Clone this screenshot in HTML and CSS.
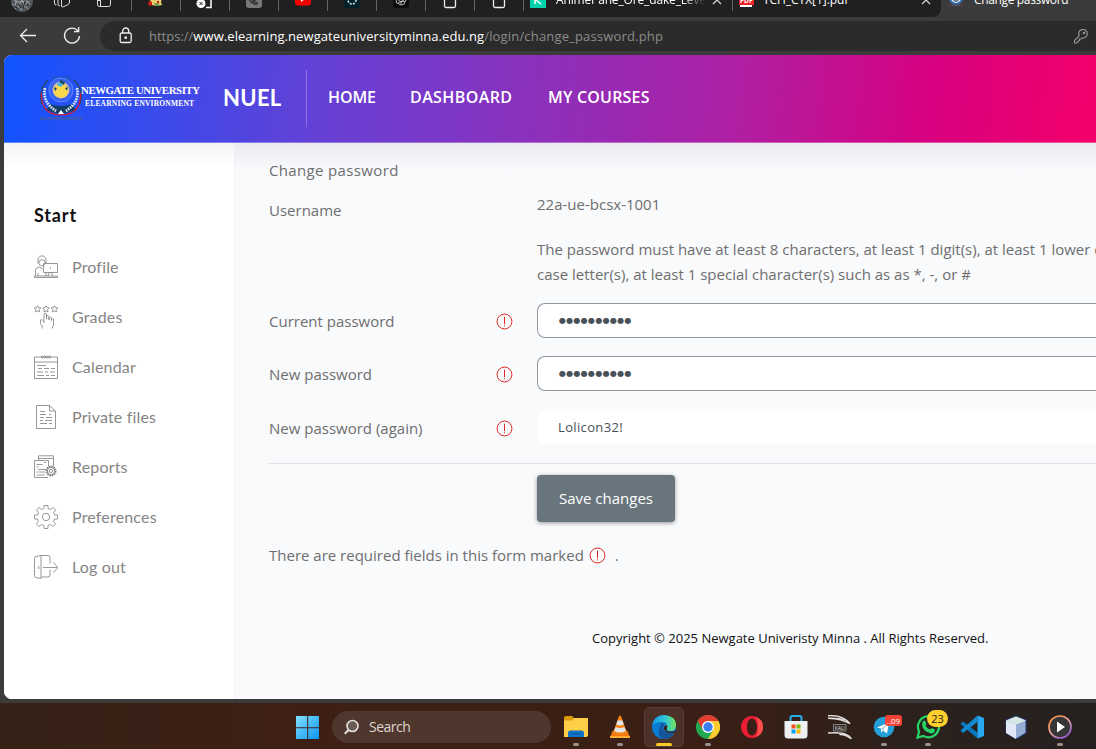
FILE: index.html
```html
<!DOCTYPE html>
<html lang="en">
<head>
<meta charset="utf-8">
<title>Change password</title>
<link rel="stylesheet" href="styles.css">
</head>
<body>
<div class="screen">
  <div class="tabs">
    <svg class="tab-lead" width="131" height="17" viewBox="0 0 131 17" fill="none" stroke="#ddd">
      <circle cx="22" cy="1" r="11" fill="#50555a" stroke="none"/>
      <path d="M12 4l3 2 1-5 3 4 3-5 3 6 3-5 2 4M15 9l3-3 3 4 5-4 2 3M14 0l5 2 8-1" stroke="#aeb3b8" stroke-width=".8"/>
      <path d="M18 3l3 5M25 1l-2 8M14 6l5 3M29 4l-4 2" stroke="#2a2c2e"/>
      <path d="M54.500 -3v6q0 2 2 2M58 -3v7q0 2 2 2M61.500 -4v10q0 1 1 1l5-2q2-1 2-3v-7"/>
      <rect x="97.500" y="-7" width="13" height="13.500" rx="2"/><path d="M100.500 -3v9M98 0.500h3"/>
    </svg>
    <div class="mini"><svg width="48" height="17"><path d="M18 0l5-2h7l-1 4 1 3-6 1-4-1-1-3z" fill="#e9cf6b"/><path d="M17 1l3 1 0 3-3 1-1-2zM25 1h2v2h-2z" fill="#d11d16"/><path d="M22 3h5v3h-4z" fill="#7d9b53"/></svg></div>
    <div class="mini"><svg width="48" height="17"><path d="M22 -7h5q3 0 3 3v11.500h-5" fill="none" stroke="#fff" stroke-width="1.500"/><circle cx="20" cy="3.500" r="4.500" fill="#fff"/><path d="M18.500 2l3 3M21.500 2l-3 3" stroke="#222"/></svg></div>
    <div class="mini"><svg width="48" height="17"><rect x="16" y="-8" width="16" height="16" rx="3" fill="#777"/><path d="M19 0l8 5M20 3l8-4M24-3v8M20 0q4 7 8 2M21-1l7 5" stroke="#333" fill="none"/></svg></div>
    <div class="mini"><svg width="48" height="17"><rect x="16" y="-9" width="16" height="14.500" rx="3" fill="#f70000"/><path d="M22-4v6l4-3z" fill="#fff"/></svg></div>
    <div class="mini"><svg width="48" height="17"><rect x="16" y="-8" width="16" height="16" rx="3" fill="#04212b"/><circle cx="24" cy="0" r="4" fill="none" stroke="#cde8e8" stroke-width="1.500" stroke-dasharray="2 1.200"/></svg></div>
    <div class="mini"><svg width="48" height="17"><rect x="16" y="-8" width="16" height="16" rx="3" fill="#090909"/><path d="M19 0q0 4 3 4l2 1 3-1 2-4M20-1l4 3 4-3M21 3l4-2 3 1M24 1v3" stroke="#ccc" fill="none" stroke-width=".9"/></svg></div>
    <div class="mini"><svg width="48" height="17"><rect x="18.500" y="-5" width="11" height="12.500" rx="1.500" fill="none" stroke="#eee" stroke-width="1.300"/></svg></div>
    <div class="mini"><svg width="48" height="17"><rect x="18.500" y="-5" width="11" height="12.500" rx="1.500" fill="none" stroke="#eee" stroke-width="1.300"/></svg></div>
    <div class="tab tab-anime">
      <svg width="16" height="17"><path d="M0 0h16v8H0z" fill="#00d2ae"/><path d="M5-4v8M11-4L6 0l5 4" stroke="#fff" stroke-width="1.500" fill="none"/></svg>
      <span class="tab-text t1">AnimePahe_Ore_dake_Level</span>
      <svg class="tab-x" width="10" height="17"><path d="M1 4l8-8M9 4L1-4" stroke="#ddd" stroke-width="1.200"/></svg>
    </div>
    <div class="tab tab-pdf">
      <svg width="16" height="17"><path d="M2 0h12v7H2z" fill="#fff"/><rect x="1" y="-3" width="15" height="8" fill="#ed2229"/><text x="2" y="3" font-family="Open Sans" font-weight="700" font-size="6.500" fill="#fff">PDF</text></svg>
      <span class="tab-text t2">TCH_CYX[1].pdf</span>
      <svg class="tab-x" width="10" height="17"><path d="M1 4l8-8M9 4L1-4" stroke="#ddd" stroke-width="1.200"/></svg>
    </div>
    <div class="tab-current">
      <svg width="16" height="17"><circle cx="8" cy="-2" r="6" fill="#dfe5e9" stroke="#3569a8" stroke-width="2"/><circle cx="8" cy="-1" r="3" fill="#687b98"/><path d="M1 5.500h14" stroke="#6a5060" stroke-dasharray="2 1"/></svg>
      <span class="tab-text t3">Change password</span>
    </div>
  </div>

  <div class="toolbar">
    <svg class="nav-icons" width="100" height="38" fill="none" stroke="#eee" stroke-width="1.300"><path d="M36 18.500H20.500M27 12l-6.500 6.500L27 25"/><path d="M78.200 14.300A7.500 7.500 0 1 0 79.500 19M78.700 10v4.700h-4.700"/></svg>
    <div class="address">
      <svg width="14" height="18" fill="none" stroke="#eee" stroke-width="1.300"><rect x="1.200" y="6" width="11" height="9.500" rx="1.500"/><path d="M3.700 6V4a3 3 0 0 1 6 0V6"/><circle cx="6.700" cy="10.700" r=".7" fill="#fff"/></svg>
      <div class="url"><span>https://</span><b>www.elearning.newgateuniversityminna.edu.ng</b><span class="path">/login/change_password.php</span></div>
      <svg class="key" width="16" height="16" fill="none" stroke="#999" stroke-width="1.100"><path d="M6.200 7.800A4.300 4.300 0 1 1 9.300 10L8 11H6.500v1.500L3.500 15H1.500v-2.500z"/><circle cx="11" cy="5" r=".8"/></svg>
    </div>
  </div>

  <div class="viewport">
    <header class="header">
      <svg class="crest" width="44" height="50" viewBox="0 0 44 50">
        <text x="12" y="7" font-family="Liberation Serif" font-weight="700" font-size="7" fill="#1d5aa5" textLength="19">NUMI</text>
        <path d="M8 7Q-2 17 2 31M34 7Q44 17 40 31" fill="none" stroke="#27485f" stroke-width="1.300"/>
        <path d="M1.500 20Q1 42 21 42Q41 42 40.500 20" fill="none" stroke="#d51c34" stroke-width="1.200"/>
        <path d="M9 31Q21 35 33 31L35 37Q21 44 7 37z" fill="#123e64"/>
        <path d="M5 15Q2 29 16 38M37 15Q40 29 26 38" fill="none" stroke="#dbe6f8" stroke-width="2.800" stroke-dasharray="1.700 .9"/>
        <circle cx="21" cy="17" r="12" fill="#3862f2" stroke="#6f8dff" stroke-width=".8"/>
        <circle cx="21" cy="17" r="8.500" fill="#dcc09c"/>
        <circle cx="21" cy="18" r="6.800" fill="#fbd84b"/>
        <path d="M20 7l5 2-1 3-4-2zM14 14l3 1.500-2 2.500zM28 13.500l-1 4-2-2z" fill="#1b4a57"/><path d="M18 9l5 2-2 3-4-2z" fill="#41b5eb"/>
        <path d="M18 41l3-4 3 4z" fill="#fff"/>
        <text x="0" y="47" font-family="Liberation Serif" font-weight="700" font-size="4.500" fill="#4a5f9c" textLength="43">KNOWLEDGE FOR SERVICE</text>
      </svg>
      <svg class="wordmark" width="121" height="30"><text x="0" y="11.500" font-family="Liberation Serif" font-weight="700" font-size="10.800" fill="#fff" textLength="119">NEWGATE UNIVERSITY</text><path d="M10 15.500h71" stroke="#fff"/><text x="4" y="24" font-family="Liberation Serif" font-weight="700" font-size="7.500" fill="#fff" textLength="109">ELEARNING ENVIRONMENT</text></svg>
      <span class="brand">NUEL</span>
      <nav class="nav"><a class="n1">HOME</a><a class="n2">DASHBOARD</a><a class="n3">MY COURSES</a></nav>
    </header>
    <div class="body">
      <aside class="side">
        <h2>Start</h2>
        <div class="item"><svg viewBox="0 0 24 24"><path d="M0.500 21h23v1.500h-23zM4 8.500Q3 1 8 .8Q13 1 12 8.500M5 6Q8 3 11 6v3Q8 13 5 9zM1.500 21v-6q0-2 4-3l3 2M4 21v-3M9.500 8.500h14v9h-14zM12 17.500v3.500M14 21q0-3.500 2.500-3.500T18 21M16.500 12v1.500"/></svg><span>Profile</span></div>
        <div class="item"><svg viewBox="0 0 24 24"><path d="M3.500.7l1 1.800 2.300.4-1.600 1.700.3 2.300-2-1-2 1 .3-2.300L.2 2.900l2.300-.4zM12 .7l1 1.800 2.300.4-1.600 1.700.3 2.300-2-1-2 1 .3-2.300-1.600-1.700 2.300-.4zM20.500.7l1 1.800 2.300.4-1.600 1.700.3 2.300-2-1-2 1 .3-2.300-1.600-1.700 2.300-.4zM8.500 23.500q0-2.500-2-5V15q1.500-2 3.500 2.500V9q1-1.500 2.500 0v5-3q1.500-1 2.500.5V15v-2.500q1.500-1 2.500.5v2.500-2q1-.5 2 .5v6l-1.500 3.500"/></svg><span>Grades</span></div>
        <div class="item"><svg viewBox="0 0 24 24"><path d="M.5 2h23v21.500H.5zM.5 7h23M3 10.500h9M4 13.500h4M10 13.500h5M17 13.500h4M3 17h6M11 17h3M16 17h5M3 20.500h7M12 20.500h3M17 20.500h4"/><path d="M7 2q1-2.500 2.500 0t2.500 0t2.500 0t2.500 0M7 2q1 2.500 2.500 0t2.500 0t2.500 0t2.500 0"/></svg><span>Calendar</span></div>
        <div class="item"><svg viewBox="0 0 24 24"><path d="M2.500.5h13l6 5.500v17.500h-19zM15.500.5V6h6M6 6.500h5M6 9.500h6M15 9.500h2M6 12.500h4M12 12.500h6M6 15.500h3M11 15.500h7M6 18.500h7M15 18.500h3"/></svg><span>Private files</span></div>
        <div class="item"><svg viewBox="0 0 24 24"><path d="M4.500 5V.8h15V11M4.500 3.500h15M.5 5.500h14v6M14 22.500H.5v-17M2.500 9.500h6M10 7.500h2M2.500 12h2M4 14.500h8M2.500 17h2M5 17h6M2.500 20h8"/><circle cx="17" cy="16" r="4.500" stroke-width="2" stroke-dasharray="1.600 .7"/><circle cx="17" cy="16" r="3.600"/><circle cx="17" cy="16" r="1.600"/></svg><span>Reports</span></div>
        <div class="item"><svg viewBox="0 0 24 24"><path d="M10 .5h4v3l2.500 1 2.500-2 2.600 2.600-2 2.500 1 2.400h3v4h-3l-1 2.500 2 2.400-2.600 2.700-2.500-2.100-2.500 1v3h-4v-3l-2.500-1L5 21.600l-2.600-2.700 2-2.400-1-2.500h-3v-4h3l1-2.400-2-2.500L5 2.500l2.500 2 2.500-1z"/><circle cx="12" cy="12" r="3.700"/></svg><span>Preferences</span></div>
        <div class="item"><svg viewBox="0 0 24 24"><path d="M7 .5h7q2 0 2 2v6M16 15v5q0 2-2 2H7M7 .5v23l-5-1q-1.500-.5-1.500-2v-17Q.5 2 2 1.500zM4.800 11v3M9 12.500h14.500M19.500 7.500l4.500 5-4.500 5"/></svg><span>Log out</span></div>
      </aside>
      <main class="main">
        <div class="crumb">Change password</div>
        <div class="row r-user"><label>Username</label><span>22a-ue-bcsx-1001</span></div>
        <p class="policy">The password must have at least 8 characters, at least 1 digit(s), at least 1 lower case letter(s), at least 1 upper<br>case letter(s), at least 1 special character(s) such as as *, -, or #</p>
        <div class="row field r1"><label>Current password</label><i class="req"><svg viewBox="0 0 16 16"><circle cx="8" cy="8" r="7"/><path d="M8 3.500v7M8 11.500v1"/></svg></i><div class="input dots">●●●●●●●●●●</div></div>
        <div class="row field r2"><label>New password</label><i class="req"><svg viewBox="0 0 16 16"><circle cx="8" cy="8" r="7"/><path d="M8 3.500v7M8 11.500v1"/></svg></i><div class="input dots">●●●●●●●●●●</div></div>
        <div class="row field r3"><label>New password (again)</label><i class="req"><svg viewBox="0 0 16 16"><circle cx="8" cy="8" r="7"/><path d="M8 3.500v7M8 11.500v1"/></svg></i><div class="input plain">Lolicon32!</div></div>
        <hr>
        <button class="save">Save changes</button>
        <div class="note"><span>There are required fields in this form marked</span><i class="req"><svg viewBox="0 0 16 16"><circle cx="8" cy="8" r="7"/><path d="M8 3.500v7M8 11.500v1"/></svg></i><span>.</span></div>
        <footer>Copyright © 2025 Newgate Univeristy Minna . All Rights Reserved.</footer>
      </main>
    </div>
  </div>

  <div class="taskbar">
    <svg class="start" width="24" height="24"><defs><linearGradient id="win" x2="1" y2="1"><stop stop-color="#83e0ff"/><stop offset="1" stop-color="#0a96f5"/></linearGradient></defs><path d="M0 0h11.200v11.200H0zM12.200 0H23v11.200H12.200zM0 12.200h11.200V23H0zM12.200 12.200H23V23H12.200z" fill="url(#win)"/></svg>
    <div class="search"><svg width="16" height="16" fill="none" stroke="#e4e0de" stroke-width="1.600"><circle cx="8.500" cy="7" r="5.500" fill="#6a5a54"/><path d="M4.500 11L.8 14.800" stroke-width="2"/></svg><span>Search</span></div>
    <div class="apps">
      <div class="app open"><svg viewBox="0 0 24 24"><path d="M0 3q0-2 2-2h6l2 2-2 4H0z" fill="#dc9b08"/><path d="M0 5.500h8l2-2.500h14v17q0 2-2 2H0z" fill="#ffcf48"/><path d="M4 22v-4q0-2.500 2.500-2.500h11q2.500 0 2.500 2.500v4z" fill="#0f74c8"/><path d="M7 18.500h10" stroke="#06579d"/></svg></div>
      <div class="app open"><svg viewBox="0 0 24 24"><path d="M4.500 16h15l2.500 6.500H2z" fill="#f07a0b"/><path d="M11 1q1-1 2 0l6 17q-7 4-14 0z" fill="#f58310"/><path d="M9.500 5.500h5l1.300 4q-4 2-7.500 0zM7.500 12q4.500 2 9 0l1.500 4q-6 3-12 0z" fill="#e2e5e8"/><path d="M2 21h20v2H2z" fill="#ffad33"/></svg></div>
      <div class="app active"><svg viewBox="0 0 24 24"><defs><linearGradient id="ed" x2="1"><stop stop-color="#1398e8"/><stop offset=".55" stop-color="#30c6d4"/><stop offset="1" stop-color="#72e45c"/></linearGradient></defs><circle cx="12" cy="12" r="12" fill="#087bd5"/><path d="M0 11Q2 0 12 0Q24 1 24 10q0 6-6 6-5 0-3-3 1-6-6-6-6 0-9 4z" fill="url(#ed)"/><path d="M8 12q1-5 6-4-3 1-3 5 1 6 12 4-4 7-11 7Q4 21 8 12z" fill="#155597"/><path d="M14.500 10q-3 1-2.500 4 1.500 4 8 4h4v-2q-3 1-6 .5-5-.5-3-3 1-2-.5-3.500z" fill="#3b2118"/></svg></div>
      <div class="app open"><svg viewBox="0 0 24 24"><circle cx="12" cy="12" r="12" fill="#22a852"/><path d="M1.600 6A12 12 0 0 1 22.400 6H12L7 15z" fill="#e43d31"/><path d="M22.400 6A12 12 0 0 1 12 24l5.200-9L12 6z" fill="#fdcb2e"/><circle cx="12" cy="12" r="6" fill="#fff"/><circle cx="12" cy="12" r="4.700" fill="#397df1"/></svg></div>
      <div class="app"><svg viewBox="0 0 24 24"><path fill-rule="evenodd" d="M12 1a11 11 0 1 0 0 22 11 11 0 1 0 0-22zm0 2.500c3 0 5 3.800 5 8.500s-2 8.500-5 8.500S7 17 7 12s2-8.500 5-8.500z" fill="#ed1c35"/><path d="M15 2q8 2 8 10t-8 10q3-2 3-10T15 2z" fill="#ff514c"/></svg></div>
      <div class="app"><svg viewBox="0 0 24 24"><path d="M6.500 6V3q0-2 2-2h7q2 0 2 2v3" fill="none" stroke="#28afea" stroke-width="2"/><path d="M.5 6h23v14q0 3.500-3.500 3.500H4Q.5 23.500.5 20z" fill="#eef0f2"/><path d="M7.500 9.500h4v4h-4z" fill="#f25022"/><path d="M12.500 9.500h4v4h-4z" fill="#7fba00"/><path d="M7.500 14.500h4v4h-4z" fill="#00a4ef"/><path d="M12.500 14.500h4v4h-4z" fill="#ffb900"/></svg></div>
      <div class="app"><svg viewBox="0 0 24 24"><path d="M0 .7q15-1 22 8-8-5-22-5.500 12-.5 16 2M0 18q13-1 18 1.500 4 1.500 5.500 4.500-6-5-12-4.500" fill="none" stroke="#dedddb" stroke-width="1.400"/><path d="M5.500 9.500h12.500v6.500H5.500z" fill="#302825" stroke="#aaa" stroke-width=".7"/><text x="6.700" y="14.700" font-family="Open Sans" font-size="5" fill="#ddd" textLength="10">KALI</text></svg></div>
      <div class="app open"><svg viewBox="0 0 24 24"><circle cx="12" cy="12" r="10.300" fill="#249ed6"/><path d="M5 12.500l12-5-2 11-4-3-2 2v-4z" fill="#fff"/><path d="M9 14l6-5-4 6.500z" fill="#a5c9db"/></svg><b class="badge red">..09</b></div>
      <div class="app open"><svg viewBox="0 0 24 24"><path d="M1.500 22.500l1.600-6A10.500 10.500 0 1 1 7.500 21z" fill="none" stroke="#25d366" stroke-width="2.300"/><path d="M7 6l2-.5 1.500 3.500-1 1.500q1.500 3 4.500 4l1.500-1.500 3.500 1.500q0 4-4 4Q6 16 6 9z" fill="#25d366"/></svg><b class="badge yellow">23</b></div>
      <div class="app"><svg viewBox="0 0 24 24"><path d="M.5 9L3 6.500l14.500 11v6z" fill="#0878be"/><path d="M.5 15.500L17.500.5v6.500L3 18z" fill="#128bd2"/><path d="M17.500.5L24 3v18l-6.500 2.500z" fill="#28a8ee"/></svg></div>
      <div class="app"><svg viewBox="0 0 24 24"><path d="M12 1l10 4v13l-10 6-10-6V5z" fill="#97aed4" stroke="#25377b"/><path d="M12 1.500l10 4-10 4-10-4z" fill="#d7e7e1"/><path d="M2 5.500l10 4V24L2 18z" fill="#e1e9f7"/></svg></div>
      <div class="app open"><svg viewBox="0 0 24 24"><defs><linearGradient id="mp" x2=".7" y2="1"><stop stop-color="#ff8a2c"/><stop offset=".55" stop-color="#e3a19a"/><stop offset="1" stop-color="#9559d2"/></linearGradient></defs><circle cx="12" cy="12" r="11" fill="#343537" stroke="url(#mp)" stroke-width="1.700"/><path d="M9 6.500v11l8-5.500z" fill="#fff"/></svg></div>
    </div>
  </div>
</div>
</body>
</html>
```
FILE: styles.css
```css
* { box-sizing: border-box; }
body { margin: 0; overflow: hidden; font-family: "Open Sans", sans-serif; }
svg { display: block; flex: none; }
.screen { width: 1096px; height: 749px; display: flex; flex-direction: column; overflow: hidden; background: #3b3b3b; }

.tabs { height: 17px; display: flex; overflow: hidden; background: linear-gradient(90deg, #202020 930px, #3b3b3b 930px); flex: none; }
.mini { width: 49px; flex: none; display: flex; border-left: 1px solid #666; height: 11px; }
.tab { display: flex; align-items: flex-start; flex: none; }
.tab svg { height: 17px; }
.tab-anime { width: 209px; padding-left: 6px; border-left: 1px solid #666; height: 11px; }
.tab-pdf { width: 209px; height: 17px; padding-left: 6px; background: linear-gradient(#666, #666) 0 0 / 1px 11px no-repeat #202020; border-radius: 0 0 8px 0; }
.tab-text { color: #fff; font: 12px/16px "Open Sans", sans-serif; margin-top: -8px; white-space: nowrap; flex: none; }
.t1 { margin-left: 10px; width: 149px; overflow: hidden; letter-spacing: -.15px; -webkit-mask-image: linear-gradient(90deg, #000 85%, transparent); }
.t2 { margin-left: 9px; width: 151px; letter-spacing: -.05px; }
.tab-x { margin-left: 7px; }
.tab-current { flex: 1; display: flex; padding-left: 7px; }
.t3 { margin-left: 10px; letter-spacing: -.35px; }

.toolbar { height: 38px; display: flex; flex: none; background: #3b3b3b; }
.address { flex: 1; height: 30px; margin-top: 4px; border-radius: 15px 0 0 15px; background: #2b2b2b; display: flex; align-items: center; padding: 0 7px 0 19px; }
.url { margin-left: 16px; flex: 1; font-size: 13px; line-height: 20px; white-space: nowrap; color: #8c8c8c; }
.url b { font-weight: 400; color: #fff; letter-spacing: .07px; }
.url .path { letter-spacing: .17px; }

.viewport { width: 1092px; height: 644px; margin-left: 4px; flex: none; border-radius: 8px 0 0 8px; overflow: hidden; background: #f9fafc; }
.header { height: 88px; display: flex; align-items: center; border-bottom: 1px solid #ffffff4d; background: linear-gradient(95deg, #1154ff 0%, #6740d4 30%, #ad21a5 66%, #d8007f 85%, #f4006b 100%); background-origin: border-box; }
.crest { margin-left: 36px; margin-top: -2px; }
.wordmark { margin-left: -3px; margin-top: -3px; }
.brand { width: 84px; margin-left: 21px; height: 57px; font: 700 22px/55px Lato, sans-serif; color: #fff; border-right: 1px solid #ffffff40; letter-spacing: .3px; }
.nav { display: flex; margin: -3px 0 0 21px; color: #fff; font: 600 16px/24px "Open Sans", sans-serif; white-space: nowrap; }
.n1 { width: 82px; letter-spacing: -.1px; }
.n2 { width: 138px; letter-spacing: .4px; }
.n3 { letter-spacing: .2px; }

.body { height: 556px; display: flex; background: #f9fafc; }
.side { width: 231px; flex: none; padding: 60px 30px 0; background: linear-gradient(#f4f4f4, #fff 22px); border-right: 1px solid #f0f1f4; }
.side h2 { margin: 0 0 27px; font: 700 18px/24px Lato, sans-serif; letter-spacing: .85px; color: #101010; }
.item { height: 26px; margin-bottom: 24px; display: flex; align-items: center; color: #858585; font: 400 16px/24px Lato, sans-serif; letter-spacing: .17px; }
.item svg { width: 24px; height: 24px; margin: 0 14.5px 0 -.5px; fill: none; stroke: #858585; stroke-width: .85; }

.main { flex: 1; min-width: 0; overflow: hidden; padding: 15px 0 0 34px; color: #6e6e6e; font-size: 15px; line-height: 25px; white-space: nowrap; background: linear-gradient(#ebecef, #f9fafc 28px); }
.crumb { letter-spacing: .35px; }
.row { display: flex; }
.row label { width: 227px; flex: none; }
.r-user { margin-top: 9px; height: 31px; }
.r-user label { padding-top: 6px; width: 268px; }
.policy { margin: 14px 0 0 268px; }
.field { height: 35px; align-items: center; }
.r1 { margin-top: 16px; } .r2 { margin-top: 18px; } .r3 { margin-top: 19px; }
.req svg { width: 17px; height: 17px; fill: none; stroke: #dd1c18; stroke-width: .9; }
.field .req { width: 41px; flex: none; padding-top: 2px; }
.field label { padding-top: 2px; }
.input { flex: 1; height: 35px; background: #fff; border: 1px solid #8f96a0; border-right: 0; border-radius: 8px 0 0 8px; padding-left: 20px; color: #495057; font-size: 13px; line-height: 32px; }
.dots { font: 8px/34px "DejaVu Sans", sans-serif; letter-spacing: .3px; padding-left: 21px; }
.plain { border-color: #f9fafc; letter-spacing: .35px; }
hr { border: 0; height: 1px; background: #dfe0e3; margin: 18px 0 11px; }
.save { display: block; margin-left: 268px; width: 138px; height: 47px; padding: 0; border: 0; border-radius: 4px; background: #69757c; color: #fff; font: 15px/47px "Open Sans", sans-serif; box-shadow: 0 1px 4px #0006; }
.note { display: flex; margin-top: 21px; align-items: center; }
.note .req { margin: 0 9px 0 5px; }
footer { margin: 58px 0 0 323px; font-size: 13px; line-height: 25px; color: #111; }

.taskbar { height: 46px; margin-top: 4px; flex: none; display: flex; align-items: center; background: linear-gradient(90deg, #352116, #3e1f15 27%, #391f15 65%, #29211e 88%, #25201f); padding-left: 296px; }
.search { width: 219px; height: 32px; margin-left: 12px; margin-top: 2px; border-radius: 16px; display: flex; align-items: center; padding-left: 12px; gap: 9px; background: #50372d; color: #ddd7d3; font-size: 14px; letter-spacing: -.5px; }
.search span { margin-top: -1px; }
.start { margin-top: 3px; }
.apps { display: flex; margin-left: 3px; }
.app { width: 44px; height: 46px; display: flex; justify-content: center; padding-top: 12px; position: relative; }
.app svg { width: 24px; height: 24px; }
.open::after, .active::after { content: ""; position: absolute; bottom: 3px; left: 19px; width: 6px; height: 3px; border-radius: 2px; background: #9b918e; }
.active::after { width: 16px; left: 14px; background: #ffca28; }
.active::before { content: ""; position: absolute; inset: 4px 2px 2px; border: 1px solid #573e35; border-radius: 5px; background: #4b3128; }
.active svg { position: relative; }
.badge { position: absolute; z-index: 2; font-weight: 400; text-align: center; }
.red { left: 23px; top: 12px; width: 17px; height: 11px; border-radius: 3px; background: #f44336; color: #fff; font-size: 8px; line-height: 11px; }
.yellow { left: 21px; top: 7px; width: 21px; height: 17px; border-radius: 9px; background: #ffd02c; color: #171717; font-size: 11px; line-height: 17px; }
```
